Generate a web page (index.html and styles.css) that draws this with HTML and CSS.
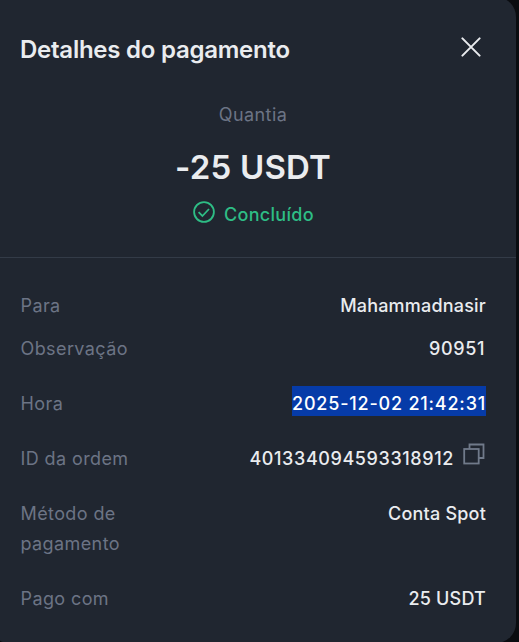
FILE: index.html
```html
<!DOCTYPE html>
<html lang="pt">
<head>
  <meta charset="UTF-8">
  <meta name="viewport" content="width=device-width, initial-scale=1.0">
  <title>Detalhes do pagamento</title>
  <link rel="stylesheet" href="styles.css">
</head>
<body>
  <div class="modal">
    <!-- Header -->
    <div class="modal-header">
      <h1>Detalhes do pagamento</h1>
      <button class="close-btn" aria-label="Fechar">
        <svg width="20" height="20" viewBox="0 0 20 20" fill="none" stroke="#eaecef" stroke-width="2" stroke-linecap="round">
          <path d="M1.4 1.4L18.6 18.6M18.6 1.4L1.4 18.6"/>
        </svg>
      </button>
    </div>

    <!-- Amount and status -->
    <div class="summary">
      <div class="summary-label">Quantia</div>
      <div class="amount">-25 USDT</div>
      <div class="status">
        <svg width="22" height="22" viewBox="0 0 22 22" fill="none" stroke="#2ebd85" stroke-width="1.8">
          <circle cx="11" cy="11" r="9.9"/>
          <path d="M5.6 11.2L9.4 15L16 8"/>
        </svg>
        <span>Concluído</span>
      </div>
    </div>

    <!-- Payment details -->
    <div class="details">
      <div class="row row-tight">
        <div class="label">Para</div>
        <div class="value">Mahammadnasir</div>
      </div>
      <div class="row">
        <div class="label">Observação</div>
        <div class="value value-number">90951</div>
      </div>
      <div class="row">
        <div class="label">Hora</div>
        <div class="value value-time"><span class="selected">2025-12-02 21:42:31</span></div>
      </div>
      <div class="row">
        <div class="label">ID da ordem</div>
        <div class="value value-number value-id">
          <span>401334094593318912</span>
          <svg class="copy-icon" width="22" height="22" viewBox="0 0 22 22" fill="none" stroke="#707a8a" stroke-width="1.8">
            <path d="M6.5 6V1.5H20.5V15H16"/>
            <rect x="1.2" y="6" width="14.5" height="14.5"/>
          </svg>
        </div>
      </div>
      <div class="row">
        <div class="label">Método de pagamento</div>
        <div class="value">Conta Spot</div>
      </div>
      <div class="row">
        <div class="label">Pago com</div>
        <div class="value">25 USDT</div>
      </div>
    </div>
  </div>
</body>
</html>
```
FILE: styles.css
```css
* {
  box-sizing: border-box;
}

body {
  margin: 0;
  height: 642px;
  overflow: hidden;
  background-color: #0a0c10;
  color: #eaecef;
  font-family: "Inter", "Liberation Sans", sans-serif;
}

/* The modal is a little larger than the window on three sides */
.modal {
  width: 527px;
  height: 646px;
  margin: -3px 0 0 -11px;
  border-radius: 20px;
  background-color: #202630;
}

.modal-header {
  display: flex;
  justify-content: space-between;
  align-items: center;
  height: 98px;
  padding: 7px 35px 0 31px;
}

h1 {
  margin: 0;
  font-size: 24px;
  font-weight: 600;
  line-height: 32px;
  letter-spacing: -0.25px;
}

.close-btn {
  display: flex;
  padding: 0;
  margin-top: -6px;
  border: none;
  background: none;
  cursor: pointer;
}

/* Amount */
.summary {
  height: 163px;
  padding: 5px 0 0 1px;
  border-bottom: 1px solid #333b47;
  text-align: center;
}

.summary-label {
  font-size: 18px;
  line-height: 30px;
  color: #6c7485;
  letter-spacing: 0.4px;
}

.amount {
  margin-top: 13px;
  font-size: 33px;
  font-weight: 600;
  line-height: 48px;
  letter-spacing: 0.2px;
}

.status {
  display: flex;
  justify-content: center;
  align-items: center;
  gap: 9px;
  margin-top: 9px;
  padding-left: 1px;
  font-size: 18px;
  font-weight: 500;
  line-height: 30px;
  letter-spacing: 0.3px;
  color: #2ebd85;
}

.status svg {
  margin-top: -6px;
}

/* Detail rows */
.details {
  padding: 33px 30px 0 31.5px;
}

.row {
  display: flex;
  justify-content: space-between;
  margin-bottom: 25px;
  font-size: 18px;
  line-height: 30px;
}

.row-tight {
  margin-bottom: 13px;
}

.label {
  width: 130px;
  color: #6c7485;
  letter-spacing: 0.4px;
}

.value {
  font-weight: 500;
  letter-spacing: 0.2px;
}

.value-number {
  padding-right: 1px;
  letter-spacing: 0.6px;
}

.value-time {
  letter-spacing: 0.8px;
}

.value-id {
  display: flex;
  gap: 9px;
}

.copy-icon {
  margin-top: -1px;
}

/* Highlight sits slightly above the line box */
.selected {
  display: block;
  height: 30px;
  margin-top: -3px;
  padding-top: 3px;
  background-color: #063ba8;
  color: #fff;
}
```
